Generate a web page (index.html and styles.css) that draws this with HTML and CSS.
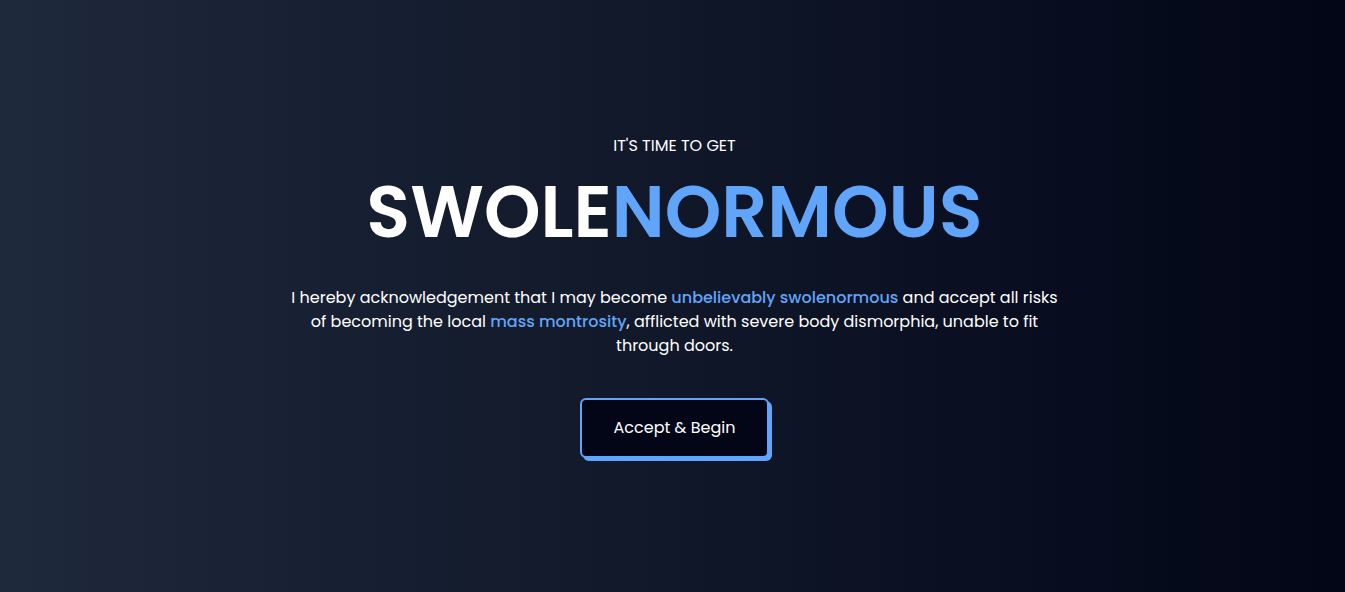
FILE: index.html
```html
<!DOCTYPE html>
<html lang="en">
<head>
<meta charset="utf-8">
<title>Swolenormous</title>
<link rel="stylesheet" href="styles.css">
</head>
<body>
<main class="hero">
  <section class="intro">
    <p class="eyebrow">IT'S TIME TO GET</p>
    <h1 class="title">SWOLE<span class="accent">NORMOUS</span></h1>
    <p class="lead">I hereby acknowledgement that I may become <strong class="hl">unbelievably swolenormous</strong> and accept all risks of becoming the local <strong class="hl">mass montrosity</strong>, afflicted with severe body dismorphia, unable to fit through doors.</p>
    <button class="cta" type="button">Accept &amp; Begin</button>
  </section>
</main>
</body>
</html>
```
FILE: styles.css
```css
* { box-sizing: border-box; }
html, body { margin: 0; padding: 0; }
body {
  font-family: "Poppins", "Open Sans", "DejaVu Sans", sans-serif;
  color: #fff;
  background: linear-gradient(to right, #1e293b, #020617);
  min-height: 100vh;
}
.hero {
  min-height: 100vh;
  display: flex;
  align-items: center;
  justify-content: center;
  padding-left: 4px;
}
.intro {
  display: flex;
  flex-direction: column;
  align-items: center;
  text-align: center;
  max-width: 772px;
}
.eyebrow {
  margin: 0;
  font-size: 16px;
  line-height: 24px;
}
.title {
  margin: 8px 0 0;
  font-size: 72px;
  line-height: 91px;
  font-weight: 600;
}
.accent { color: #60a5fa; }
.lead {
  margin: 29px 0 0;
  font-size: 16px;
  line-height: 24px;
}
.hl { color: #60a5fa; font-weight: 500; }
.cta {
  margin-top: 40px;
  font-family: inherit;
  font-size: 16px;
  line-height: 24px;
  font-weight: 400;
  color: #fff;
  background: #020617;
  border: 2px solid #60a5fa;
  border-radius: 6px;
  padding: 16px 32px;
  box-shadow: 3px 3px 0 #60a5fa;
  cursor: pointer;
}
```
